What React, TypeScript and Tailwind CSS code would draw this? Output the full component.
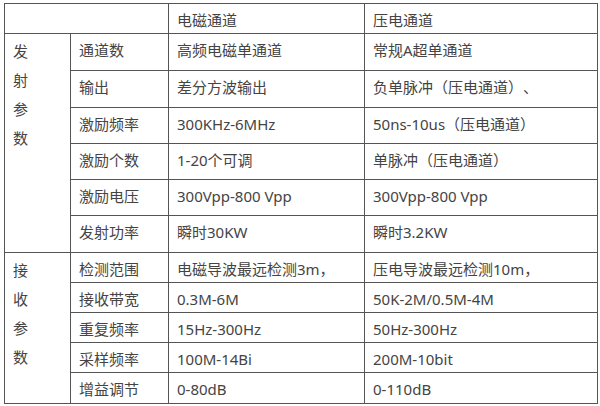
const upper: [string, string, string][] = [
  ["通道数", "高频电磁单通道", "常规A超单通道"],
  ["输出", "差分方波输出", "负单脉冲（压电通道）、"],
  ["激励频率", "300KHz-6MHz", "50ns-10us（压电通道）"],
  ["激励个数", "1-20个可调", "单脉冲（压电通道）"],
  ["激励电压", "300Vpp-800 Vpp", "300Vpp-800 Vpp"],
  ["发射功率", "瞬时30KW", "瞬时3.2KW"],
];
const upperH = ["h-[37px]", "h-[37px]", "h-[36px]", "h-[36px]", "h-[36px]", "h-[37px]"];

const lower: [string, string, string][] = [
  ["检测范围", "电磁导波最远检测3m，", "压电导波最远检测10m，"],
  ["接收带宽", "0.3M-6M", "50K-2M/0.5M-4M"],
  ["重复频率", "15Hz-300Hz", "50Hz-300Hz"],
  ["采样频率", "100M-14Bi", "200M-10bit"],
  ["增益调节", "0-80dB", "0-110dB"],
];
const lowerH = ["h-[30px]", "h-[30px]", "h-[30px]", "h-[30px]", "h-[31px]"];

const cell =
  "border border-[#555] align-top pl-2 pt-[4px] pb-0 leading-[24px] whitespace-nowrap";

function Side({ chars }: { chars: string[] }) {
  return (
    <div className="flex flex-col leading-[29px] -mt-[1px]">
      {chars.map((c, i) => (
        <span key={i}>{c}</span>
      ))}
    </div>
  );
}

export default function App() {
  return (
    <div
      className="w-[600px] h-[406px] bg-white pt-[3px] pl-[4px] text-[15px] text-[#444] [text-spacing-trim:space-all]"
      style={{ fontFamily: '"Noto Sans", "Noto Sans CJK SC", sans-serif' }}
    >
      <table className="table-fixed border-collapse w-[593px]">
        <colgroup>
          <col className="w-[66px]" />
          <col className="w-[98px]" />
          <col className="w-[196px]" />
          <col className="w-[233px]" />
        </colgroup>
        <tbody>
          <tr className="h-[30px]">
            <td className={cell} colSpan={2}></td>
            <td className={cell}>电磁通道</td>
            <td className={cell}>压电通道</td>
          </tr>
          {upper.map((r, i) => (
            <tr key={r[0]} className={upperH[i]}>
              {i === 0 && (
                <td className={cell} rowSpan={upper.length}>
                  <Side chars={["发", "射", "参", "数"]} />
                </td>
              )}
              <td className={cell}>{r[0]}</td>
              <td className={cell}>{r[1]}</td>
              <td className={cell}>{r[2]}</td>
            </tr>
          ))}
          {lower.map((r, i) => (
            <tr key={r[0]} className={lowerH[i]}>
              {i === 0 && (
                <td className={cell} rowSpan={lower.length}>
                  <Side chars={["接", "收", "参", "数"]} />
                </td>
              )}
              <td className={cell}>{r[0]}</td>
              <td className={cell}>{r[1]}</td>
              <td className={cell}>{r[2]}</td>
            </tr>
          ))}
        </tbody>
      </table>
    </div>
  );
}
